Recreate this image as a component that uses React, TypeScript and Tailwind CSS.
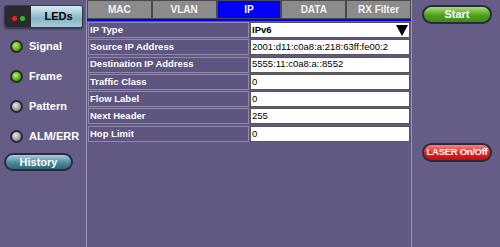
import React from "react";

const rows: [string, string][] = [
  ["IP Type", "IPv6"],
  ["Source IP Address", "2001:d11:c0a8:a:218:63ff:fe00:2"],
  ["Destination IP Address", "5555:11:c0a8:a::8552"],
  ["Traffic Class", "0"],
  ["Flow Label", "0"],
  ["Next Header", "255"],
  ["Hop Limit", "0"],
];

const tabs = ["MAC", "VLAN", "IP", "DATA", "RX Filter"];

function Led({ color, label }: { color: "green" | "gray"; label: string }) {
  return (
    <div className="flex items-center gap-[6px] pl-[6px] h-[14px]">
      <div
        className={
          "w-[13px] h-[13px] rounded-full border-2 border-[#2a2838] " +
          (color === "green"
            ? "bg-[radial-gradient(circle_at_40%_35%,#b8f060,#4aa010_70%)]"
            : "bg-[radial-gradient(circle_at_40%_35%,#e8e8e8,#909090_70%)]")
        }
      />
      <span className="text-white font-bold text-[11px]">{label}</span>
    </div>
  );
}

export default function App() {
  return (
    <div
      className="w-[500px] h-[247px] flex bg-[#655d86] overflow-hidden"
      style={{ fontFamily: '"Liberation Sans", Arial, sans-serif' }}
    >
      {/* Left sidebar */}
      <div className="w-[86px] flex flex-col pt-[5px] pl-[4px]">
        <div className="w-[79px] h-[23px] flex rounded-[3px] overflow-hidden border border-[#3a3a48] shadow-[0_1px_2px_rgba(0,0,0,0.5)]">
          <div className="w-[26px] bg-[#2a2a30] flex items-center justify-center gap-[3px] pt-[3px]">
            <div className="w-[5px] h-[5px] rounded-full bg-[#f02020]" />
            <div className="w-[5px] h-[5px] rounded-full bg-[#30c020]" />
          </div>
          <div className="flex-1 bg-[linear-gradient(to_bottom,#d8eef4,#88b4c4_60%,#a8ccd8)] flex items-center justify-center pl-[4px]">
            <span className="text-black font-bold text-[11px]">LEDs</span>
          </div>
        </div>
        <div className="flex flex-col gap-[16px] mt-[11px]">
          <Led color="green" label="Signal" />
          <Led color="green" label="Frame" />
          <Led color="gray" label="Pattern" />
          <Led color="gray" label="ALM/ERR" />
        </div>
        <div className="mt-[10px] w-[69px] h-[18px] rounded-full border-2 border-[#2c2a3c] bg-[linear-gradient(to_bottom,#a8d0dc,#4c8a9c_55%,#2e6878)] flex items-center justify-center">
          <span className="text-white font-bold text-[11px]">History</span>
        </div>
      </div>

      {/* Main panel */}
      <div className="w-[326px] flex flex-col border-l border-[#9a94b8] border-r border-r-[#9a94b8] bg-[#625a82]">
        <div className="flex h-[19px] bg-[#555]">
          {tabs.map((t) => (
            <div
              key={t}
              className={
                "flex-1 flex items-center justify-center text-[10px] font-bold border border-[#4a4a4a] " +
                (t === "IP" ? "bg-[#0000ff] text-white" : "bg-[#8b8b8b] text-[#f4f4f4]")
              }
            >
              {t}
            </div>
          ))}
        </div>
        <div className="h-[2px] bg-[#0000ff]" />
        <div className="flex flex-col gap-[1.3px] pt-[1px] px-[1px]">
          {rows.map(([l, v], i) => (
            <div key={l} className="flex h-[16px] gap-[1px]">
              <div className="w-[161px] bg-[#5e5680] border border-[#8e88aa] flex items-center pl-[1px] text-white font-bold text-[9.5px]">
                {l}
              </div>
              <div className="flex-1 bg-white border border-[#555] flex items-center pl-[1px] text-black text-[9.5px] justify-between">
                <span className={i === 0 ? "font-bold" : ""}>{v}</span>
                {i === 0 && (
                  <svg width="12" height="11" viewBox="0 0 12 11" className="mr-[1px]">
                    <polygon points="0,0 12,0 6,11" fill="#000" />
                  </svg>
                )}
              </div>
            </div>
          ))}
        </div>
      </div>

      {/* Right sidebar */}
      <div className="flex-1 flex flex-col items-center pt-[5px] pl-[2px]">
        <div className="w-[70px] h-[19px] rounded-full border-2 border-[#2c2a3c] bg-[linear-gradient(to_bottom,#a8e070,#50a020_55%,#3c8a18)] flex items-center justify-center">
          <span className="text-white font-bold text-[11px]">Start</span>
        </div>
        <div className="mt-[119px] w-[70px] h-[19px] rounded-full border-2 border-[#2c2a3c] bg-[linear-gradient(to_bottom,#ff8080,#e82020_55%,#c01010)] flex items-center justify-center">
          <span className="text-white font-bold text-[9.5px] tracking-[-0.3px] whitespace-nowrap">LASER On/Off</span>
        </div>
      </div>
    </div>
  );
}
